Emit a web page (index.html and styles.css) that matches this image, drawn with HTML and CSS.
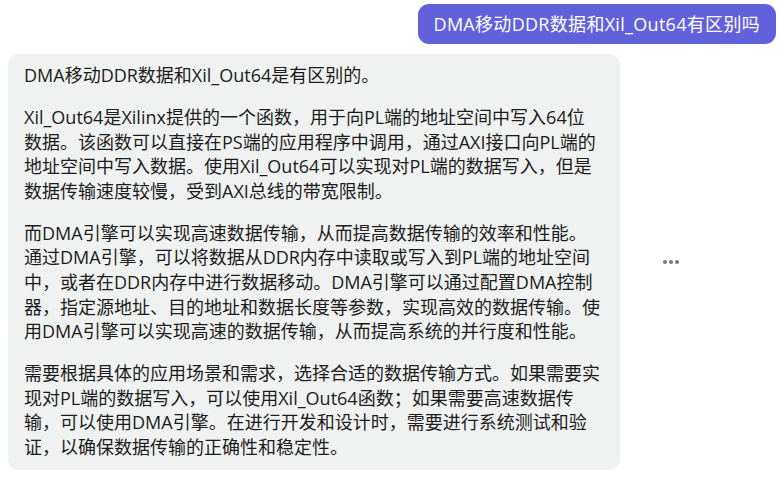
FILE: index.html
```html
<!DOCTYPE html>
<html lang="zh-CN">
<head>
<meta charset="utf-8">
<link rel="stylesheet" href="styles.css">
</head>
<body>
<div class="chat">
  <div class="row row-user">
    <div class="bubble bubble-user">DMA移动DDR数据和Xil_Out64有区别吗</div>
  </div>
  <div class="row row-bot">
    <div class="bubble bubble-bot">
      <p>DMA移动DDR数据和Xil_Out64是有区别的。</p>
      <p>Xil_Out64是Xilinx提供的一个函数，用于向PL端的地址空间中写入64位数据。该函数可以直接在PS端的应用程序中调用，通过AXI接口向PL端的地址空间中写入数据。使用Xil_Out64可以实现对PL端的数据写入，但是数据传输速度较慢，受到AXI总线的带宽限制。</p>
      <p>而DMA引擎可以实现高速数据传输，从而提高数据传输的效率和性能。通过DMA引擎，可以将数据从DDR内存中读取或写入到PL端的地址空间中，或者在DDR内存中进行数据移动。DMA引擎可以通过配置DMA控制器，指定源地址、目的地址和数据长度等参数，实现高效的数据传输。使用DMA引擎可以实现高速的数据传输，从而提高系统的并行度和性能。</p>
      <p>需要根据具体的应用场景和需求，选择合适的数据传输方式。如果需要实现对PL端的数据写入，可以使用Xil_Out64函数；如果需要高速数据传输，可以使用DMA引擎。在进行开发和设计时，需要进行系统测试和验证，以确保数据传输的正确性和稳定性。</p>
    </div>
    <div class="more"><span></span><span></span><span></span></div>
  </div>
</div>
</body>
</html>
```
FILE: styles.css
```css
html, body {
  margin: 0;
  padding: 0;
  background: #ffffff;
}
body {
  font-family: "Open Sans", "Noto Sans CJK SC", sans-serif;
  font-size: 18px;
  color: #1c1c1c;
}
.chat {
  display: flex;
  flex-direction: column;
  gap: 10px;
  padding: 4px 3px 0 8px;
}
.row {
  display: flex;
}
.row-user {
  justify-content: flex-end;
}
.bubble {
  border-radius: 11px;
}
.bubble-user {
  background: #6161dc;
  color: #ffffff;
  padding: 8px 16px;
  line-height: 24px;
  letter-spacing: 0.3px;
}
.row-bot {
  align-items: center;
}
.bubble-bot {
  width: 576px;
  background: #f0f2f1;
  padding: 9px 20px 11px 16px;
  line-height: 24.6px;
}
.bubble-bot p {
  margin: 0 0 17.4px;
}
.bubble-bot p:last-child {
  margin-bottom: 0;
}
.more {
  display: flex;
  gap: 2px;
  margin-left: 43px;
}
.more span {
  width: 4px;
  height: 4px;
  border-radius: 50%;
  background: #777777;
}
```
